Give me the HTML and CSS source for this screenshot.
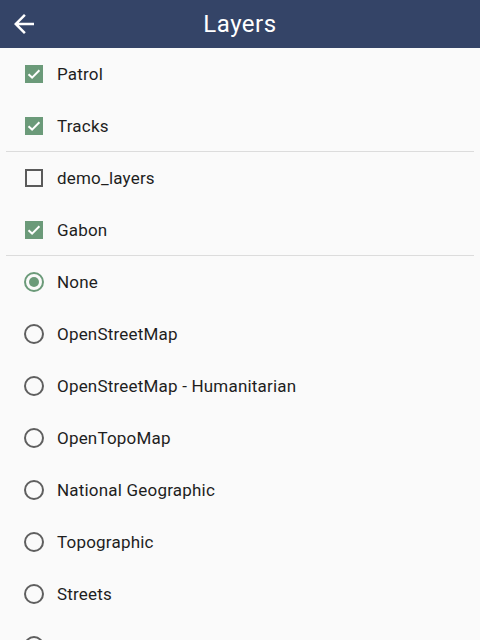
FILE: index.html
```html
<!DOCTYPE html>
<html>
<head>
<meta charset="utf-8">
<link rel="stylesheet" href="styles.css">
</head>
<body>
<div class="app">
  <header class="bar">
    <svg class="back" viewBox="0 0 24 24" width="30" height="30"><path fill="#fff" d="M20 11H7.83l5.59-5.59L12 4l-8 8 8 8 1.41-1.41L7.83 13H20v-2z"/></svg>
    <h1 class="title">Layers</h1>
  </header>
  <div class="list">
    <div class="row"><span class="cb on"><svg viewBox="0 0 18 18" width="18" height="18"><path d="M3.5 9.2l3.6 3.4 7.3-7.3" fill="none" stroke="#fff" stroke-width="2"/></svg></span><span class="label">Patrol</span></div>
    <div class="row"><span class="cb on"><svg viewBox="0 0 18 18" width="18" height="18"><path d="M3.5 9.2l3.6 3.4 7.3-7.3" fill="none" stroke="#fff" stroke-width="2"/></svg></span><span class="label">Tracks</span></div>
    <div class="divider"></div>
    <div class="row"><span class="cb"></span><span class="label">demo_layers</span></div>
    <div class="row"><span class="cb on"><svg viewBox="0 0 18 18" width="18" height="18"><path d="M3.5 9.2l3.6 3.4 7.3-7.3" fill="none" stroke="#fff" stroke-width="2"/></svg></span><span class="label">Gabon</span></div>
    <div class="divider"></div>
    <div class="row"><span class="rb on"><span class="dot"></span></span><span class="label">None</span></div>
    <div class="row"><span class="rb"></span><span class="label">OpenStreetMap</span></div>
    <div class="row"><span class="rb"></span><span class="label">OpenStreetMap - Humanitarian</span></div>
    <div class="row"><span class="rb"></span><span class="label">OpenTopoMap</span></div>
    <div class="row"><span class="rb"></span><span class="label">National Geographic</span></div>
    <div class="row"><span class="rb"></span><span class="label">Topographic</span></div>
    <div class="row"><span class="rb"></span><span class="label">Streets</span></div>
    <div class="row"><span class="rb"></span><span class="label">Imagery</span></div>
  </div>
</div>
</body>
</html>
```

FILE: styles.css
```css
html, body {
  margin: 0;
  padding: 0;
  background: #fafafa;
  overflow: hidden;
  height: 640px;
}
body {
  font-family: Roboto, "Liberation Sans", sans-serif;
}
.app {
  width: 480px;
  height: 640px;
  overflow: hidden;
}
.bar {
  height: 48px;
  background: #344467;
  display: flex;
  align-items: center;
  position: relative;
  justify-content: center;
}
.back {
  position: absolute;
  left: 9px;
  top: 9px;
}
.title {
  margin: 0;
  color: #fff;
  font-weight: 400;
  font-size: 24px;
  letter-spacing: 0.5px;
  line-height: 48px;
}
.list {
  display: flex;
  flex-direction: column;
}
.row {
  height: 52px;
  display: flex;
  align-items: center;
  flex-shrink: 0;
}
.divider {
  height: 1px;
  margin: -1px 6px 0 6px;
  background: #dcdcdc;
  flex-shrink: 0;
}
.cb {
  box-sizing: border-box;
  width: 18px;
  height: 18px;
  margin-left: 25px;
  margin-right: 14px;
  border: 2px solid #5a5a5a;
  display: flex;
  align-items: center;
  justify-content: center;
}
.cb.on {
  border: none;
  background: #6b9a79;
}
.rb {
  box-sizing: border-box;
  width: 20px;
  height: 20px;
  margin-left: 24px;
  margin-right: 13px;
  border: 2px solid #5f5f5f;
  border-radius: 50%;
  display: flex;
  align-items: center;
  justify-content: center;
}
.rb.on {
  border-color: #6b9a79;
}
.dot {
  width: 10px;
  height: 10px;
  border-radius: 50%;
  background: #6b9a79;
}
.label {
  font-size: 17px;
  letter-spacing: 0.2px;
  color: #1e1e1e;
}
```
